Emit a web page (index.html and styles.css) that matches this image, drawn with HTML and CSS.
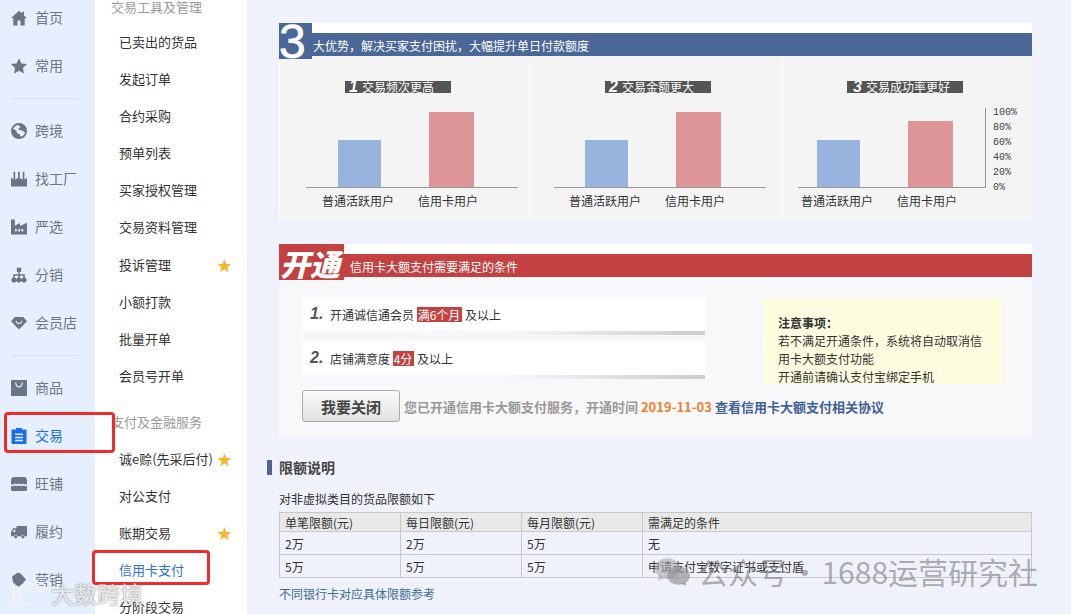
FILE: index.html
```html
<!DOCTYPE html>
<html lang="zh-CN">
<head>
  <meta charset="UTF-8">
  <meta name="viewport" content="width=device-width, initial-scale=1.0">
  <link rel="stylesheet" href="styles.css">
  <title>信用卡支付</title>
</head>
<body>
  <div class="page">
    <nav class="rail">
      <a class="rail-item"><svg viewBox="0 0 16 16"><path d="M8 .8 0 8.300h2.300V15.500h4.200v-5h3v5h4.200V8.300H16L13 5.500V1.800h-2.200v1.700z"/></svg>首页</a>
      <a class="rail-item"><svg viewBox="0 0 16 16"><path d="M8 .3l2.400 5.100 5.600.7-4.100 3.800 1.100 5.600L8 12.800l-5 2.700 1.100-5.600L0 6.100l5.600-.7z"/></svg>常用</a>
      <div class="rail-line"></div>
      <a class="rail-item"><svg viewBox="0 0 16 16"><path fill-rule="evenodd" d="M8 0a8 8 0 1 0 0 16A8 8 0 0 0 8 0zM2.200 5.800C3 3.800 5 2.200 7.300 2l2.200 2-2 1.500L8 7l3 .5 3 2c-.5 2-2.200 3.800-4.400 4.300L8.500 11 6 10.300 5.500 8z"/></svg>跨境</a>
      <a class="rail-item"><svg viewBox="0 0 16 16"><path d="M0 15.500V6.800l2.500 1.700V.8h1.700v7.900l2.900-1.900V.8h1.700v6.100l2.900 1.800V.8h1.700v7.700L16 6.800v8.700z"/></svg>找工厂</a>
      <a class="rail-item"><svg viewBox="0 0 16 16"><path fill-rule="evenodd" d="M0 .5h3.800v6.300L9 4v3l7-3.200v11.700H0zM4 10v2.500h1.800V10zm3.200 0v2.500H9V10zm3.200 0v2.500h1.800V10z"/></svg>严选</a>
      <a class="rail-item"><svg viewBox="0 0 16 16"><path d="M5.800.8h4.400V5H8.700v2.300h5.100v3.300a2.600 2.600 0 1 1-1.500 0V8.800H8.700v1.800a2.600 2.600 0 1 1-1.500 0V8.800H3.700v1.800a2.600 2.600 0 1 1-1.500 0V7.300h5V5H5.800z"/></svg>分销</a>
      <a class="rail-item"><svg viewBox="0 0 16 16"><path fill-rule="evenodd" d="M3.800 2h8.400L16 6.200 8 14.500 0 6.200zM4.500 6C5 8 6.300 9.200 8 9.200S11 8 11.500 6l-1.100-.2C10 7.200 9.200 8 8 8s-2-.8-2.400-2.200z"/></svg>会员店</a>
      <div class="rail-line"></div>
      <a class="rail-item"><svg viewBox="0 0 16 16"><path fill-rule="evenodd" d="M1 0h14c.6 0 1 .4 1 1v14c0 .6-.4 1-1 1H1c-.6 0-1-.4-1-1V1c0-.6.4-1 1-1zM4 2.500C4.300 5.500 5.800 7.500 8 7.500s3.700-2 4-5l-1.200-.1C10.500 4.800 9.500 6.200 8 6.200S5.500 4.800 5.200 2.400z"/></svg>商品</a>
      <a class="rail-item is-active"><svg viewBox="0 0 16 16"><path fill-rule="evenodd" d="M5 0h6v1.500h3.500c.6 0 1 .4 1 1V15c0 .6-.4 1-1 1h-13c-.6 0-1-.4-1-1V2.500c0-.6.4-1 1-1H5zM4 5.500V7h8V5.500zm0 3.200v1.500h8V8.700zm0 3.100v1.500h8v-1.500z"/></svg>交易</a>
      <a class="rail-item"><svg viewBox="0 0 16 16"><path d="M3 1h10c1.800 0 3 1.300 3 3.200V8c-1.500 1-2.800.4-4-.4-1.300 1-2.700 1-4 0-1.300 1-2.700 1-4 0C2.800 8.400 1.500 9 0 8V4.200C0 2.300 1.200 1 3 1zM0 9.800c1.500.6 2.600.4 4-.4 1.300.9 2.700.9 4 .1 1.300.8 2.700.8 4-.1 1.400.8 2.500 1 4 .4v3.400c0 1.200-.8 1.800-1.800 1.800H1.800C.8 15 0 14.400 0 13.200z"/></svg>旺铺</a>
      <a class="rail-item"><svg viewBox="0 0 16 16"><path fill-rule="evenodd" d="M5.500 2H16v10.300h-2.200a2 2 0 0 0-3.900 0H6.600a2 2 0 0 0-3.900 0H0V8l2.300-3.700h3.200zM1.800 8h2.500V5.800H3.100z"/><circle cx="4.700" cy="12.800" r="1.600"/><circle cx="11.900" cy="12.800" r="1.600"/></svg>履约</a>
      <a class="rail-item"><svg viewBox="0 0 16 16"><path d="M1 4.500 7 .5l3 1.500 5 5.500L9 15 2.500 12z"/></svg>营销</a>
    </nav>

    <aside class="submenu">
      <h4 class="sub-head sub-head-first">交易工具及管理</h4>
      <a class="sub-item">已卖出的货品</a>
      <a class="sub-item">发起订单</a>
      <a class="sub-item">合约采购</a>
      <a class="sub-item">预单列表</a>
      <a class="sub-item">买家授权管理</a>
      <a class="sub-item">交易资料管理</a>
      <a class="sub-item">投诉管理<span class="fav">★</span></a>
      <a class="sub-item">小额打款</a>
      <a class="sub-item">批量开单</a>
      <a class="sub-item">会员号开单</a>
      <h4 class="sub-head">支付及金融服务</h4>
      <a class="sub-item">诚e赊(先采后付)<span class="fav">★</span></a>
      <a class="sub-item">对公支付</a>
      <a class="sub-item">账期交易<span class="fav">★</span></a>
      <a class="sub-item is-active">信用卡支付</a>
      <a class="sub-item">分阶段交易</a>
    </aside>

    <main class="main">
      <section>
        <div class="banner banner-blue">
          <span class="badge-three">3</span>
          <span class="banner-title banner-title-blue">大优势，解决买家支付困扰，大幅提升单日付款额度</span>
        </div>
        <div class="chart-panel">
          <div class="chart-col">
            <div class="pill"><b>1</b>交易频次更高</div>
            <div class="plot plot-a">
              <div class="bar bar-blue"></div>
              <div class="bar bar-red"></div>
            </div>
            <div class="labels labels-a"><span>普通活跃用户</span><span>信用卡用户</span></div>
          </div>
          <div class="chart-col">
            <div class="pill"><b>2</b>交易金额更大</div>
            <div class="plot plot-b">
              <div class="bar bar-blue"></div>
              <div class="bar bar-red"></div>
            </div>
            <div class="labels labels-b"><span>普通活跃用户</span><span>信用卡用户</span></div>
          </div>
          <div class="chart-col">
            <div class="pill pill-wide"><b>3</b>交易成功率更好</div>
            <div class="plot plot-c">
              <div class="bar bar-blue"></div>
              <div class="bar bar-red bar-short"></div>
              <div class="scale">
                <span>100%</span><span>80%</span><span>60%</span><span>40%</span><span>20%</span><span>0%</span>
              </div>
            </div>
            <div class="labels labels-c"><span>普通活跃用户</span><span>信用卡用户</span></div>
          </div>
        </div>
      </section>

      <section class="open-section">
        <div class="banner banner-red">
          <span class="badge-open">开通</span>
          <span class="banner-title banner-title-red">信用卡大额支付需要满足的条件</span>
        </div>
        <div class="open-panel">
          <div class="open-top">
            <div class="cond-list">
              <div class="cond"><i>1.</i>开通诚信通会员 <em>满6个月</em> 及以上</div>
              <div class="cond-shadow"></div>
              <div class="cond cond-next"><i>2.</i>店铺满意度 <em>4分</em> 及以上</div>
              <div class="cond-shadow"></div>
            </div>
            <div class="note">
              <strong>注意事项：</strong><br>
              若不满足开通条件，系统将自动取消信<br>
              用卡大额支付功能<br>
              开通前请确认支付宝绑定手机
            </div>
          </div>
          <div class="open-action">
            <button class="close-btn">我要关闭</button>
            <span class="status">您已开通信用卡大额支付服务，开通时间 <span class="status-date">2019-11-03</span> <a class="status-link">查看信用卡大额支付相关协议</a></span>
          </div>
        </div>
      </section>

      <h3 class="limit-title">限额说明</h3>
      <p class="limit-sub">对非虚拟类目的货品限额如下</p>
      <table class="limit-table">
        <thead>
          <tr>
            <th class="w-num">单笔限额(元)</th>
            <th class="w-num">每日限额(元)</th>
            <th class="w-num">每月限额(元)</th>
            <th>需满足的条件</th>
          </tr>
        </thead>
        <tbody>
          <tr><td>2万</td><td>2万</td><td>5万</td><td>无</td></tr>
          <tr><td>5万</td><td>5万</td><td>5万</td><td>申请支付宝数字证书或支付盾</td></tr>
        </tbody>
      </table>
      <a class="bank-link">不同银行卡对应具体限额参考</a>
    </main>

    <!-- annotations and watermarks sit over the screenshot -->
    <div class="mark mark-rail"></div>
    <div class="mark mark-sub"></div>
    <div class="wm-right">
      <svg class="wm-icon" viewBox="0 0 36 30"><ellipse cx="13" cy="12" rx="12" ry="10" fill="#aaa" fill-opacity=".6"/><path d="M5 18l-1 6 6-3z" fill="#aaa" fill-opacity=".6"/><ellipse cx="24" cy="19" rx="11" ry="9" fill="#8f8f8f" fill-opacity=".65"/><path d="M30 25l2 4-6-2z" fill="#8f8f8f" fill-opacity=".65"/></svg>
      <span>公众号 · 1688运营研究社</span>
    </div>
    <div class="wm-left">
      <svg class="wm-logo" viewBox="0 0 40 30"><path d="M5 5v22M22 5C13 5 10 11 10 16s3 11 11 11" fill="none" stroke="#f2f2f2" stroke-width="3"/><circle cx="26" cy="9" r="4" fill="none" stroke="#f2f2f2" stroke-width="2"/><circle cx="34" cy="9" r="4" fill="none" stroke="#f2f2f2" stroke-width="2"/></svg>
      <span>大数跨境</span>
    </div>
  </div>
</body>
</html>
```

FILE: styles.css
```css
* {
  box-sizing: border-box;
}

html, body {
  margin: 0;
  height: 100%;
  overflow: hidden;
}

body {
  font-family: "Noto Sans CJK SC", "Liberation Sans", sans-serif;
  font-size: 12px;
  color: #333;
  background-color: #eff2fa;
}

.page {
  position: relative;
  display: flex;
  width: 1071px;
  height: 614px;
  overflow: hidden;
}

/* left icon rail */
.rail {
  flex: none;
  width: 95px;
  height: 621px;
  padding: 0 11px;
  margin-top: -7px;
  background-color: #e5effd;
}

.rail-item {
  display: flex;
  align-items: center;
  gap: 8px;
  height: 48px;
  white-space: nowrap;
  font-size: 14px;
  color: #6d7684;
}

.rail-item svg {
  flex: none;
  width: 16px;
  height: 16px;
  margin-top: 2px;
  fill: #6a7585;
}

.rail-item.is-active {
  color: #1a6df0;
}

.rail-item.is-active svg {
  fill: #1a6df0;
}

.rail-line {
  height: 1px;
  margin: 9px 5px 7px 0;
  background-color: #d5e0ef;
}

/* second level menu */
.submenu {
  flex: none;
  width: 152px;
  padding-left: 16px;
  background-color: #fff;
}

.sub-head {
  margin: 9px 0 0;
  font-size: 13px;
  font-weight: normal;
  line-height: 37px;
  color: #9b9b9b;
}

.sub-head-first {
  margin-top: -10px;
  line-height: 33px;
}

.sub-item {
  display: flex;
  justify-content: space-between;
  padding: 0 15px 0 8px;
  font-size: 13px;
  line-height: 37.1px;
  white-space: nowrap;
  color: #333;
}

.sub-item.is-active {
  color: #2a6fd6;
}

.fav {
  font-size: 15px;
  color: #f7b52c;
}

/* main column */
.main {
  flex: none;
  width: 785px;
  padding: 23px 0 0 29px;
  border-left: 3px solid #f1f1f1;
}

.main > * {
  width: 753px;
}

.banner {
  position: relative;
  display: flex;
  height: 33px;
}

.banner-blue {
  background: linear-gradient(#fff 10px, #4a6798 10px);
}

.banner-red {
  background: linear-gradient(#fff 10px, #c44141 10px);
}

.badge-three {
  flex: none;
  width: 33px;
  height: 36px;
  padding-right: 7px;
  overflow: hidden;
  background-color: #4a6798;
  font-family: "Liberation Sans", sans-serif;
  font-size: 48px;
  line-height: 38px;
  text-align: center;
  color: #fff;
  -webkit-text-stroke: 0.6px #fff;
}

.badge-open {
  flex: none;
  width: 65px;
  height: 36px;
  padding-left: 1px;
  overflow: hidden;
  background-color: #c44141;
  font-size: 30px;
  font-style: italic;
  font-weight: 900;
  line-height: 39px;
  white-space: nowrap;
  color: #fff;
}

.banner-title {
  padding-top: 10px;
  line-height: 25px;
  color: #fff;
}

.banner-title-blue {
  padding-left: 1px;
}

.banner-title-red {
  padding-left: 6px;
}

/* three little charts */
.chart-panel {
  display: flex;
  height: 163px;
  background-color: #f4f4f4;
  border-left: 1px solid #fff;
  border-bottom: 1px solid #fff;
}

.chart-col {
  width: 251px;
  padding-top: 25px;
  border-right: 1px solid #fff;
}

.chart-col:last-child {
  width: 250px;
  border-right: none;
}

.pill {
  display: flex;
  align-items: center;
  width: 106px;
  height: 12px;
  margin-left: 65px;
  padding-left: 4px;
  overflow: hidden;
  background-color: #555;
  line-height: 12px;
  color: #fff;
}

.chart-col:nth-child(2) .pill {
  margin-left: 74px;
}

.pill-wide {
  width: 116px;
  margin-left: 65px;
}

.chart-col:nth-child(3) .pill {
  padding-left: 6px;
}

.pill b {
  margin-right: 4px;
  font-family: "Liberation Sans", sans-serif;
  font-size: 16px;
  font-style: italic;
}

.plot {
  position: relative;
  display: flex;
  align-items: flex-end;
  gap: 48px;
  width: 212px;
  height: 80px;
  margin-top: 15px;
  border-bottom: 1px solid #999;
}

.plot-a {
  margin-left: 26px;
  padding-left: 32px;
}

.plot-b {
  margin-left: 23px;
  padding-left: 31px;
}

.plot-c {
  width: 188px;
  margin-left: 16px;
  padding-left: 19px;
  border-right: 1px solid #999;
}

.bar {
  width: 43px;
}

.bar-blue {
  height: 47px;
  background-color: #98b3de;
}

.bar-red {
  width: 45px;
  height: 75px;
  background-color: #dd9598;
}

.bar-short {
  height: 66px;
}

.scale {
  position: absolute;
  left: 195px;
  top: -3px;
  display: flex;
  flex-direction: column;
  font-family: "Liberation Mono", monospace;
  font-size: 10px;
  line-height: 15px;
  color: #444;
}

.labels {
  display: flex;
  gap: 24px;
  margin-top: 4px;
  line-height: 18px;
}

.labels-a {
  padding-left: 42px;
}

.labels-b {
  padding-left: 38px;
}

.labels-c {
  padding-left: 19px;
}

/* open conditions */
.open-section {
  margin-top: 25px;
}

.open-panel {
  padding: 20px 0 15px 23px;
  background-color: #f8f8fa;
}

.open-top {
  display: flex;
  height: 93px;
}

.cond-list {
  flex: none;
  width: 403px;
}

.cond {
  display: flex;
  align-items: center;
  height: 34px;
  padding-left: 8px;
  white-space: pre;
  background-color: #fff;
  color: #333;
}

.cond-next {
  margin-top: 6px;
}

.cond i {
  width: 20px;
  font-family: "Liberation Sans", sans-serif;
  font-size: 16px;
  font-weight: bold;
  color: #555;
}

.cond em {
  padding: 0 2px 0 1px;
  font-style: normal;
  line-height: 15px;
  background-color: #c44141;
  color: #fff;
}

.cond-shadow {
  height: 4px;
  background: linear-gradient(to right, rgba(204, 204, 204, 0) 50%, #ccc 100%);
}

.note {
  flex: none;
  width: 240px;
  height: 86px;
  margin: 1px 0 0 58px;
  padding: 16px 15px 0;
  overflow: hidden;
  background-color: #fefddf;
  line-height: 18px;
  color: #333;
}

.open-action {
  display: flex;
  align-items: center;
  gap: 4px;
  height: 32px;
}

.close-btn {
  flex: none;
  width: 98px;
  height: 32px;
  padding: 0;
  border: 1px solid #aaa;
  border-radius: 3px;
  background: linear-gradient(#fafafa, #e2e2e2);
  font-family: inherit;
  font-size: 15px;
  font-weight: bold;
  color: #444;
}

.status {
  font-size: 13px;
  font-weight: bold;
  white-space: nowrap;
  color: #999;
}

.status-date {
  color: #f08030;
}

.status-link {
  color: #3f6196;
}

/* limit table */
.main > .limit-title {
  width: 765px;
  margin: 23px 0 0 -12px;
  padding-left: 7px;
  border-left: 5px solid #4a6798;
  font-size: 14px;
  line-height: 15px;
  color: #444;
}

.limit-sub {
  margin: 15px 0 0;
  line-height: 18px;
}

.limit-table {
  margin-top: 4px;
  border-collapse: collapse;
  table-layout: fixed;
}

.limit-table th, .limit-table td {
  padding: 0 0 0 5px;
  border: 1px solid #c8c8c8;
  font-weight: normal;
  text-align: left;
  line-height: 15px;
}

.limit-table th {
  height: 19px;
  background-color: #e9e9e9;
}

.limit-table td {
  height: 23px;
}

.w-num {
  width: 121px;
}

.bank-link {
  display: block;
  margin-top: 7px;
  line-height: 18px;
  color: #3f6b96;
}

/* red annotation boxes */
.mark {
  position: absolute;
  border: 3px solid #ef2b2b;
  border-radius: 4px;
}

.mark-rail {
  left: 4px;
  top: 412px;
  width: 111px;
  height: 41px;
}

.mark-sub {
  left: 92px;
  top: 550px;
  width: 118px;
  height: 35px;
}

/* watermarks */
.wm-right {
  position: absolute;
  left: 654px;
  top: 551px;
  display: flex;
  align-items: center;
  gap: 7px;
  font-size: 30px;
  line-height: 40px;
  word-spacing: -5px;
  white-space: nowrap;
  color: rgba(125, 125, 125, 0.62);
}

.wm-icon {
  width: 37px;
  height: 31px;
}

.wm-left {
  position: absolute;
  left: 9px;
  top: 577px;
  display: flex;
  align-items: center;
  gap: 4px;
  font-size: 23px;
  line-height: 32px;
  color: rgba(240, 240, 240, 0.95);
  text-shadow: 0 0 2px rgba(90, 90, 90, 0.8);
}

.wm-logo {
  width: 38px;
  height: 30px;
}
```
